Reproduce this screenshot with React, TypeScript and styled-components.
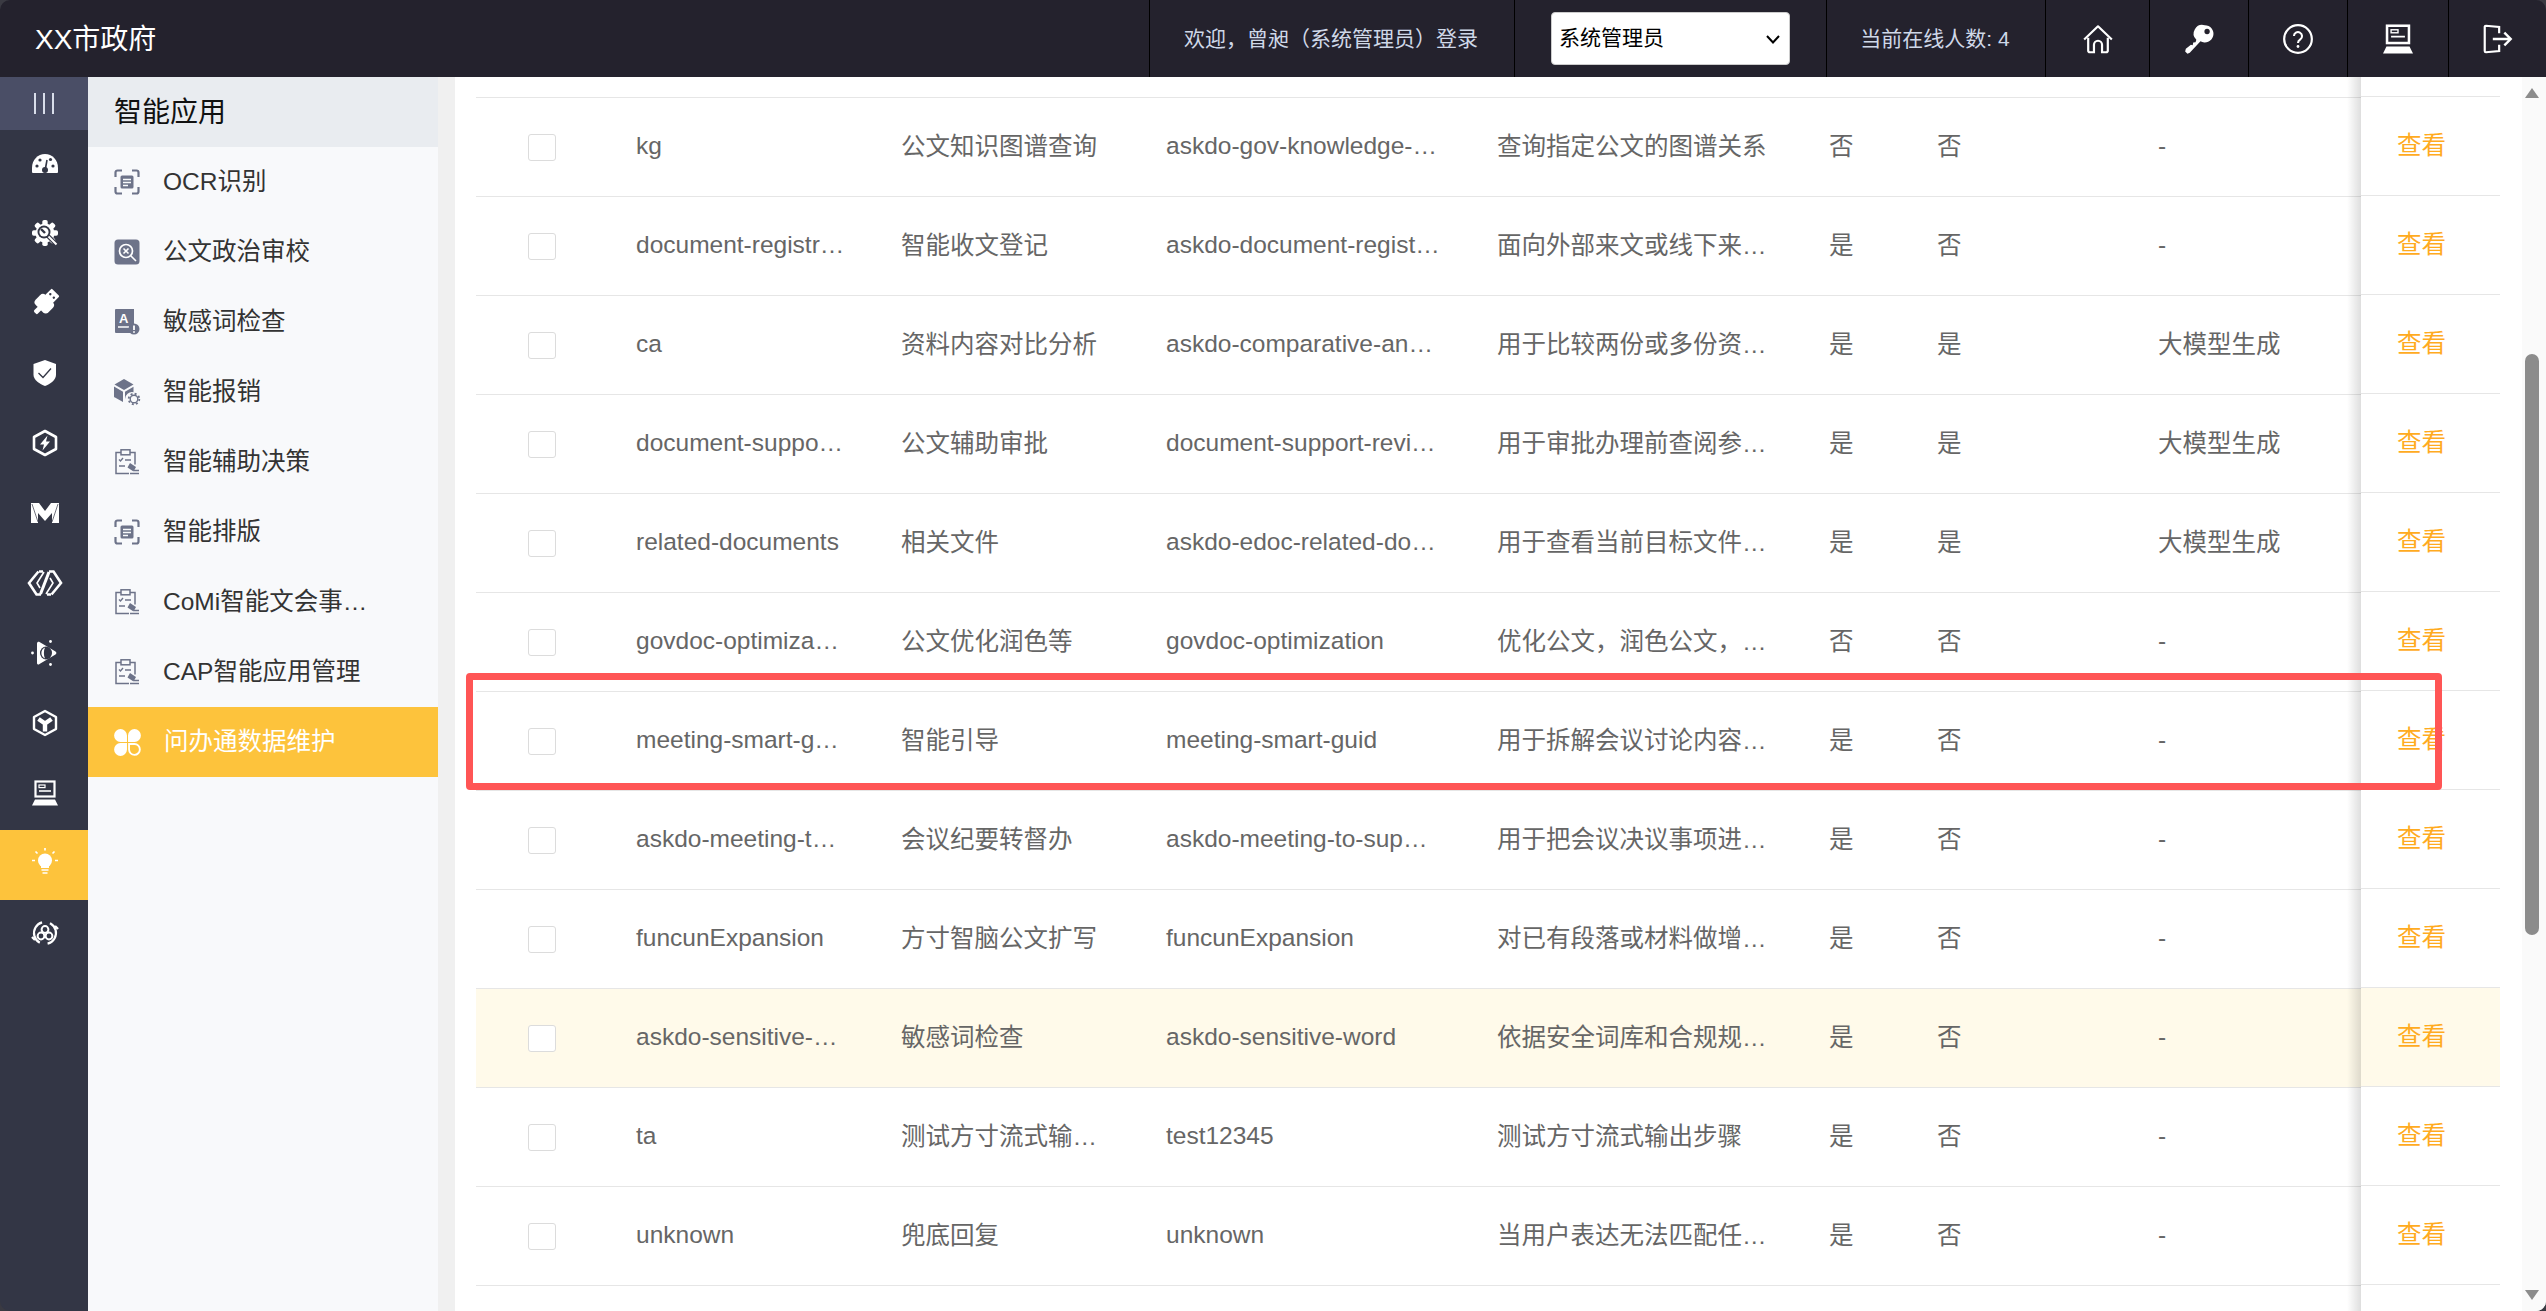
import React from 'react'
import styled, { createGlobalStyle } from 'styled-components'

const GlobalStyle = createGlobalStyle`
  html, body {
    margin: 0;
    height: 100%;
    overflow: hidden;
    background: #3a3a42;
  }
  * { box-sizing: border-box; }
`

const Shell = styled.div`
  display: flex;
  flex-direction: column;
  width: 100vw;
  height: 100vh;
  overflow: hidden;
  border-radius: 10px;
  font-family: "Liberation Sans", "Noto Sans CJK SC", sans-serif;
  color: #666;
`

const Header = styled.header`
  display: flex;
  align-items: stretch;
  flex: 0 0 77px;
  background: #24222d;
`

const Brand = styled.div`
  display: flex;
  align-items: center;
  flex: 1;
  padding: 0 0 3px 35px;
  font-size: 28px;
  color: #fff;
`

const HeaderCell = styled.div<{ $width: number }>`
  display: flex;
  align-items: center;
  justify-content: center;
  width: ${({ $width }) => $width}px;
  border-left: 1px solid #000;
  font-size: 21px;
  color: #cfd8e8;
  white-space: nowrap;
`

const HeaderLabel = styled.span`
  padding: 0 2px 3px 0;
`

const RoleBox = styled.div`
  position: relative;
  width: 239px;
  height: 53px;

  & > svg {
    position: absolute;
    top: 23px;
    right: 10px;
    pointer-events: none;
  }
`

const RoleSelect = styled.select`
  appearance: none;
  width: 100%;
  height: 100%;
  padding: 0 0 3px 7px;
  border: 1px solid #ccc;
  border-radius: 4px;
  background: #fff;
  font: inherit;
  color: #000;
`

const Body = styled.div`
  display: flex;
  flex: 1;
  min-height: 0;
`

const Rail = styled.nav`
  display: flex;
  flex-direction: column;
  flex: 0 0 88px;
  background: #333645;
`

const RailToggle = styled.div`
  display: flex;
  align-items: center;
  justify-content: center;
  gap: 7px;
  height: 53px;
  background: #4a4e66;

  & > i {
    width: 2px;
    height: 21px;
    background: #d9deea;
  }
`

const RailItem = styled.div<{ $active?: boolean }>`
  display: flex;
  align-items: center;
  justify-content: center;
  height: 70px;
  padding: 0 0 4px 2px;
  background: ${({ $active }) => ($active ? '#fdc33c' : 'transparent')};
`

const SubMenu = styled.aside`
  display: flex;
  flex-direction: column;
  flex: 0 0 350px;
  background: #f8f9fb;
`

const SubTitle = styled.div`
  display: flex;
  align-items: center;
  height: 70px;
  padding: 0 0 4px 26px;
  background: #e9ecf0;
  font-size: 28px;
  color: #111;
`

const SubItem = styled.div<{ $active?: boolean }>`
  display: flex;
  align-items: center;
  gap: 23px;
  height: 70px;
  padding-left: 26px;
  background: ${({ $active }) => ($active ? '#fdc33c' : 'transparent')};
  font-size: 24.5px;
  color: ${({ $active }) => ($active ? '#fff' : '#333')};
  white-space: nowrap;

  & > span {
    padding-bottom: 5px;
  }
`

const Main = styled.main`
  position: relative;
  display: flex;
  flex: 1;
  min-width: 0;
  margin-left: 17px;
  background: #fff;
  box-shadow: -17px 0 0 #f0f0f0;
`

const TableArea = styled.div`
  position: relative;
  flex: 1;
  min-width: 0;
  margin: 0 22px 0 21px;
  padding-top: 20px;
  overflow: hidden;
`

const Table = styled.table`
  width: 100%;
  table-layout: fixed;
  border-collapse: separate;
  border-spacing: 0;
  border-top: 1px solid #e6e6e6;
  font-size: 24.5px;
`

const Row = styled.tr<{ $hot?: boolean }>`
  background: ${({ $hot }) => ($hot ? '#fffaea' : 'transparent')};
`

const Cell = styled.td<{ $width: number; $cjk?: boolean }>`
  width: ${({ $width }) => $width}px;
  height: 99px;
  padding: 0 16px ${({ $cjk }) => ($cjk ? 6 : 3)}px;
  border-bottom: 1px solid #e6e6e6;
  overflow: hidden;
  white-space: nowrap;
`

const CheckCell = styled(Cell)`
  padding: 0 0 0 52px;
`

const Check = styled.input.attrs({ type: 'checkbox' })`
  appearance: none;
  display: block;
  width: 28px;
  height: 27px;
  margin: 0;
  border: 1px solid #dcdcdc;
  border-radius: 3px;
  background: #fff;
`

const FixedColumn = styled.div`
  position: absolute;
  top: 19px;
  right: 0;
  bottom: 0;
  width: 139px;
  border-top: 1px solid #e6e6e6;
  background: #fff;
  font-size: 24.5px;
  color: #ffab1f;

  &::before {
    content: '';
    position: absolute;
    top: -20px;
    bottom: 0;
    left: -14px;
    width: 14px;
    background: linear-gradient(to right, rgba(0, 0, 0, 0), rgba(0, 0, 0, 0.13));
  }
`

const FixedRow = styled.div<{ $hot?: boolean }>`
  display: flex;
  align-items: center;
  height: 99px;
  padding: 0 0 6px 36px;
  border-bottom: 1px solid #e6e6e6;
  background: ${({ $hot }) => ($hot ? '#fffaea' : '#fff')};
`

const Scrollbar = styled.div`
  display: flex;
  flex-direction: column;
  align-items: center;
  flex: 0 0 24px;
  padding: 11px 4px 11px 0;
  background: #fafafa;
`

const ScrollArrow = styled.div<{ $down?: boolean }>`
  width: 0;
  height: 0;
  border-left: 7px solid transparent;
  border-right: 7px solid transparent;
  border-${({ $down }) => ($down ? 'top' : 'bottom')}: 10px solid #8c8c8c;
  margin-top: ${({ $down }) => ($down ? 'auto' : '0')};
`

const ScrollThumb = styled.div`
  width: 14px;
  height: 581px;
  margin-top: 256px;
  border-radius: 7px;
  background: #8c8c8c;
`

const Callout = styled.div`
  position: absolute;
  top: 596px;
  left: 11px;
  width: 1976px;
  height: 117px;
  border: 7px solid #ff5555;
  border-radius: 4px;
  pointer-events: none;
`

const W = '#fff'
const D = '#333645'

const Icon: React.FC<{ size?: number; children: React.ReactNode }> = ({ size = 26, children }) => (
  <svg width={size} height={size} viewBox="0 0 26 26" fill="none" style={{ overflow: 'visible', flex: 'none' }}>
    {children}
  </svg>
)

const laptopShape = (
  <>
    <rect x="3.5" y="1.5" width="19" height="15" stroke={W} strokeWidth="2.2" />
    <rect x="7" y="5" width="6" height="2.6" stroke={W} strokeWidth="1.2" />
    <path d="M7 11h12" stroke={W} strokeWidth="1.6" />
    <path d="M3 19.5h20l3 6H0z" fill={W} />
  </>
)

const railIcons = [
  <Icon key="gauge">
    <path d="M1 23a1 1 0 0 1-1-1v-4C0 9.700 5.800 4 13 4s13 5.700 13 14v4a1 1 0 0 1-1 1z" fill={W} />
    <path d="M13 21l2-11" stroke={D} strokeWidth="1.6" />
    <circle cx="13" cy="20" r="3" fill={D} />
    <circle cx="5" cy="16" r="1.6" fill={D} />
    <circle cx="8" cy="10" r="1.6" fill={D} />
    <circle cx="18.500" cy="9.500" r="1.600" fill={D} />
    <circle cx="21" cy="16" r="1.6" fill={D} />
  </Icon>,
  <Icon key="gear">
    {[0, 45, 90, 135, 180, 225, 270, 315].map(a => (
      <rect key={a} x="10.300" y="0" width="5.400" height="6" rx="1.800" fill={W} transform={`rotate(${a} 13 13)`} />
    ))}
    <circle cx="13" cy="13" r="9.500" fill={W} />
    <circle cx="12" cy="12" r="6.500" fill={D} />
    <circle cx="12" cy="12" r="4.600" fill={W} />
    <path d="M9 9l4 4" stroke={D} strokeWidth="2.400" />
    <path d="M16 16l8 8" stroke={D} strokeWidth="4.400" />
    <path d="M16.500 16.500l8 8" stroke={W} strokeWidth="2" />
  </Icon>,
  <Icon key="plug">
    <g transform="rotate(45 13 13)">
      <rect x="7.500" y="-2" width="11" height="10" rx="1" fill={W} />
      <circle cx="10.500" cy="3" r="1.200" fill={D} />
      <circle cx="15.500" cy="3" r="1.200" fill={D} />
      <rect x="4" y="7" width="18" height="14" rx="4" fill={W} />
      <rect x="10.500" y="20" width="5" height="7" rx="1.500" fill={W} />
    </g>
  </Icon>,
  <Icon key="shield">
    <path d="M13 0l11 4v11c0 5-6 9-11 11C8 24 1.500 20 1.500 15V4z" fill={W} />
    <path d="M6.500 13l4.500 4.500L19 8.500" stroke={D} strokeWidth="1.300" />
  </Icon>,
  <Icon key="bolt">
    <path d="M13 1l11 6v12l-11 6-11-6V7z" stroke={W} strokeWidth="2.600" strokeLinejoin="round" />
    <path d="M15.500 5.500L8 14.500h4L10.500 20.500 18 11.500h-4z" fill={W} />
  </Icon>,
  <Icon key="m">
    <path d="M-1 3h8l6 8 6-8h8v20h-7V13l-7 8-7-8v10h-7z" fill={W} />
    <path d="M0 4l6 18M26 4l-6 18" stroke={D} strokeWidth="0.700" />
  </Icon>,
  <Icon key="code">
    <path d="M6.500 1.500L-3 13l7.500 11.500h4.500M7 1.500h4" stroke={W} strokeWidth="2.600" />
    <path d="M19.500 24.500L29 13 21.500 1.500H17M19 24.500h-4" stroke={W} strokeWidth="2.600" />
    <path d="M17 2L8.500 24" stroke={W} strokeWidth="3" />
    <path d="M12 2L5 13l3 5M14 24l7-11-3-5" stroke={W} strokeWidth="1.600" />
  </Icon>,
  <Icon key="play">
    <path d="M5 3.500c0-1.500 1.500-2 2.500-1.500l16 9.500c1.200.8 1.200 2.200 0 3l-16 9.500C6.500 25 5 24.500 5 23z" fill={W} />
    <ellipse cx="14" cy="13" rx="6" ry="6.500" fill={D} />
    <path d="M13 7.500a6 6 0 0 0 0 11c-1.500-3-1.500-8 0-11z" fill={W} />
    <circle cx="0.500" cy="13" r="1.400" fill={W} />
    <circle cx="18.500" cy="1.500" r="1.400" fill={W} />
    <circle cx="18.500" cy="24.500" r="1.400" fill={W} />
  </Icon>,
  <Icon key="cube">
    <path d="M13 1l11 6v12l-11 6-11-6V7z" stroke={W} strokeWidth="2.400" strokeLinejoin="round" />
    <path d="M13 13.500v8M13 13.500L6.500 9M13 13.500L19.500 9" stroke={W} strokeWidth="4.400" />
  </Icon>,
  <Icon key="laptop">{laptopShape}</Icon>,
  <Icon key="bulb">
    <circle cx="13" cy="10.500" r="7" fill={W} />
    <path d="M9 15h8v3H9z" fill={W} />
    <path d="M9.500 20h7M10.500 23h5M13 -2v2.500M3.500 1.500l2 2M22.500 1.500l-2 2M0 10.500h3M23 10.500h3" stroke={W} strokeWidth="1.700" />
  </Icon>,
  <Icon key="orbit">
    <circle cx="13" cy="13" r="11" stroke={W} strokeWidth="2.200" strokeDasharray="26 8" transform="rotate(-60 13 13)" />
    <circle cx="13" cy="9.500" r="3.400" stroke={W} strokeWidth="2" />
    <circle cx="9" cy="16" r="3.400" stroke={W} strokeWidth="2" />
    <circle cx="17" cy="16" r="3.400" stroke={W} strokeWidth="2" />
    <path d="M0 17l3 3M26 9l-3-3" stroke={W} strokeWidth="2.400" />
  </Icon>,
]

const G = '#6d7389'

const ScanDoc = () => (
  <Icon>
    <path d="M8 1.500H3.500a2 2 0 0 0-2 2V8M18 1.500h4.500a2 2 0 0 1 2 2V8M8 24.500H3.500a2 2 0 0 1-2-2V18M18 24.500h4.500a2 2 0 0 0 2-2V18" stroke={G} strokeWidth="2.200" />
    <rect x="6.500" y="6.500" width="13" height="13" rx="1.500" fill={G} />
    <path d="M9 10.500h8M9 13.500h8M9 16.500h5" stroke="#f8f9fb" strokeWidth="1.300" />
  </Icon>
)

const Audit = () => (
  <Icon>
    <rect x="0.500" y="0.500" width="25" height="25" rx="3.500" fill={G} />
    <circle cx="12" cy="12" r="6.500" stroke="#fff" strokeWidth="1.700" />
    <path d="M9.500 9.500l5 5M14.500 9.500l-5 5M17 17l5 5" stroke="#fff" strokeWidth="1.600" />
  </Icon>
)

const Sensitive = () => (
  <Icon>
    <path d="M2 0h18v18a6 6 0 0 0-2 6H2a1 1 0 0 1-1-1V1a1 1 0 0 1 1-1z" fill={G} />
    <text x="5" y="13.500" fontSize="13" fontWeight="700" fill="#fff" fontFamily="Liberation Sans">A</text>
    <path d="M4 18h11" stroke="#fff" strokeWidth="1.500" />
    <circle cx="20" cy="20" r="5.500" fill={G} />
    <path d="M20 16.500v4.500M20 22.300v1.500" stroke="#fff" strokeWidth="1.800" />
  </Icon>
)

const CubeGear = () => (
  <Icon>
    <path d="M10 0l9.500 5.500L10 11 .5 5.500z" fill={G} />
    <path d="M0 7.500l9 5.200V23l-8-4.600a1 1 0 0 1-1-1zM11 12.700l8.500-5v5.500a7 7 0 0 0-8.500 7z" fill={G} />
    <circle cx="20" cy="20" r="3.800" stroke={G} strokeWidth="1.400" />
    <circle cx="20" cy="20" r="5.300" stroke={G} strokeWidth="1.800" strokeDasharray="2 2.160" />
  </Icon>
)

const ClipGavel = () => (
  <Icon>
    <path d="M7 3.500H2v21h13M16 3.500h5v12" stroke={G} strokeWidth="1.500" />
    <rect x="7" y="0.800" width="9" height="5" stroke={G} strokeWidth="1.500" />
    <path d="M5 10.500l1.500 1.500 2.500-3M11 11h6M5 17h6" stroke={G} strokeWidth="1.400" />
    <path d="M16 14l6 4-2.500 4.500-6-4z" fill={G} />
    <path d="M20 21.500h5M16 24.500h9" stroke={G} strokeWidth="1.400" />
  </Icon>
)

const Clover = () => (
  <Icon size={27}>
    <path d="M12.500 12.500H6.200a6.200 6.200 0 1 1 6.300-6.300z" fill={W} />
    <path d="M13.500 12.500h6.300a6.200 6.200 0 1 0-6.300-6.300z" fill={W} />
    <path d="M12.500 13.500H6.200a6.200 6.200 0 1 0 6.300 6.300z" fill={W} />
    <path d="M14.500 14.500h5.300a5.200 5.200 0 1 1-5.300 5.300z" stroke={W} strokeWidth="1.800" />
  </Icon>
)

const headerIcons = [
  <Icon key="home" size={30}>
    <path d="M1 13.500L13 2l12 11.500" stroke={W} strokeWidth="1.900" strokeLinejoin="round" />
    <path d="M4.500 12v11a1.500 1.500 0 0 0 1.500 1.500h3.500V18a3.500 3.500 0 0 1 7 0v6.500H20a1.500 1.500 0 0 0 1.500-1.500V12" stroke={W} strokeWidth="1.900" />
  </Icon>,
  <Icon key="key" size={30}>
    <path d="M18 1a7.500 7.500 0 1 1-3.700 14L5 25l-2 .8-2-2 .6-2.300L6 18l1.500.5L8 16l2-.2.700-2.200A7.500 7.500 0 0 1 18 1z" fill={W} />
    <circle cx="20" cy="6.500" r="2.300" fill="#24222d" />
  </Icon>,
  <Icon key="help" size={30}>
    <circle cx="13" cy="13" r="12" stroke={W} strokeWidth="1.900" />
    <path d="M9.500 10.500a3.500 3.500 0 1 1 5.500 2.900c-1.200.8-2 1.500-2 3" stroke={W} strokeWidth="1.800" />
    <circle cx="13" cy="19.500" r="1.200" fill={W} />
  </Icon>,
  <Icon key="laptop" size={30}>{laptopShape}</Icon>,
  <Icon key="logout" size={30}>
    <path d="M14 8V2.500L2.500 1.500a1 1 0 0 0-1 1v21a1 1 0 0 0 1 1L14 23.500V18" stroke={W} strokeWidth="1.900" />
    <path d="M8.500 13h15M18.500 7.500L24 13l-5.500 5.500" stroke={W} strokeWidth="2.100" />
  </Icon>,
]

const iconCellWidths = [104, 99, 99, 101, 98]

const subItems: { label: string; icon: React.ReactNode; active?: boolean }[] = [
  { label: 'OCR识别', icon: <ScanDoc /> },
  { label: '公文政治审校', icon: <Audit /> },
  { label: '敏感词检查', icon: <Sensitive /> },
  { label: '智能报销', icon: <CubeGear /> },
  { label: '智能辅助决策', icon: <ClipGavel /> },
  { label: '智能排版', icon: <ScanDoc /> },
  { label: 'CoMi智能文会事…', icon: <ClipGavel /> },
  { label: 'CAP智能应用管理', icon: <ClipGavel /> },
  { label: '问办通数据维护', icon: <Clover />, active: true },
]

type Skill = { name: string; title: string; code: string; desc: string; a: string; b: string; source: string; hot?: boolean }

const skills: Skill[] = [
  { name: 'kg', title: '公文知识图谱查询', code: 'askdo-gov-knowledge-…', desc: '查询指定公文的图谱关系', a: '否', b: '否', source: '-' },
  { name: 'document-registr…', title: '智能收文登记', code: 'askdo-document-regist…', desc: '面向外部来文或线下来…', a: '是', b: '否', source: '-' },
  { name: 'ca', title: '资料内容对比分析', code: 'askdo-comparative-an…', desc: '用于比较两份或多份资…', a: '是', b: '是', source: '大模型生成' },
  { name: 'document-suppo…', title: '公文辅助审批', code: 'document-support-revi…', desc: '用于审批办理前查阅参…', a: '是', b: '是', source: '大模型生成' },
  { name: 'related-documents', title: '相关文件', code: 'askdo-edoc-related-do…', desc: '用于查看当前目标文件…', a: '是', b: '是', source: '大模型生成' },
  { name: 'govdoc-optimiza…', title: '公文优化润色等', code: 'govdoc-optimization', desc: '优化公文，润色公文，…', a: '否', b: '否', source: '-' },
  { name: 'meeting-smart-g…', title: '智能引导', code: 'meeting-smart-guid', desc: '用于拆解会议讨论内容…', a: '是', b: '否', source: '-' },
  { name: 'askdo-meeting-t…', title: '会议纪要转督办', code: 'askdo-meeting-to-sup…', desc: '用于把会议决议事项进…', a: '是', b: '否', source: '-' },
  { name: 'funcunExpansion', title: '方寸智脑公文扩写', code: 'funcunExpansion', desc: '对已有段落或材料做增…', a: '是', b: '否', source: '-' },
  { name: 'askdo-sensitive-…', title: '敏感词检查', code: 'askdo-sensitive-word', desc: '依据安全词库和合规规…', a: '是', b: '否', source: '-', hot: true },
  { name: 'ta', title: '测试方寸流式输…', code: 'test12345', desc: '测试方寸流式输出步骤', a: '是', b: '否', source: '-' },
  { name: 'unknown', title: '兜底回复', code: 'unknown', desc: '当用户表达无法匹配任…', a: '是', b: '否', source: '-' },
]

export default function App() {
  return (
    <Shell>
      <GlobalStyle />
      <Header>
        <Brand>XX市政府</Brand>
        <HeaderCell $width={365}><HeaderLabel>欢迎，曾昶（系统管理员）登录</HeaderLabel></HeaderCell>
        <HeaderCell $width={312}>
          <RoleBox>
            <RoleSelect defaultValue="admin">
              <option value="admin">系统管理员</option>
            </RoleSelect>
            <svg width="14" height="9" viewBox="0 0 14 9" fill="none">
              <path d="M1 1l6 6.500L13 1" stroke="#000" strokeWidth="2" />
            </svg>
          </RoleBox>
        </HeaderCell>
        <HeaderCell $width={219}><HeaderLabel>当前在线人数: 4</HeaderLabel></HeaderCell>
        {headerIcons.map((icon, i) => (
          <HeaderCell key={i} $width={iconCellWidths[i]}>{icon}</HeaderCell>
        ))}
      </Header>
      <Body>
        <Rail>
          <RailToggle><i /><i /><i /></RailToggle>
          {railIcons.map((icon, i) => (
            <RailItem key={i} $active={i === 10}>{icon}</RailItem>
          ))}
        </Rail>
        <SubMenu>
          <SubTitle>智能应用</SubTitle>
          {subItems.map(item => (
            <SubItem key={item.label} $active={item.active}>
              {item.icon}
              <span>{item.label}</span>
            </SubItem>
          ))}
        </SubMenu>
        <Main>
          <TableArea>
            <Table>
              <tbody>
                {skills.map(s => (
                  <Row key={s.name} $hot={s.hot}>
                    <CheckCell $width={144}><Check /></CheckCell>
                    <Cell $width={265}>{s.name}</Cell>
                    <Cell $width={265} $cjk>{s.title}</Cell>
                    <Cell $width={331}>{s.code}</Cell>
                    <Cell $width={332} $cjk>{s.desc}</Cell>
                    <Cell $width={108} $cjk>{s.a}</Cell>
                    <Cell $width={221} $cjk>{s.b}</Cell>
                    <Cell $width={358} $cjk={s.source !== '-'}>{s.source}</Cell>
                  </Row>
                ))}
              </tbody>
            </Table>
            <FixedColumn>
              {skills.map(s => (
                <FixedRow key={s.name} $hot={s.hot}>查看</FixedRow>
              ))}
            </FixedColumn>
          </TableArea>
          <Scrollbar>
            <ScrollArrow />
            <ScrollThumb />
            <ScrollArrow $down />
          </Scrollbar>
          <Callout />
        </Main>
      </Body>
    </Shell>
  )
}
